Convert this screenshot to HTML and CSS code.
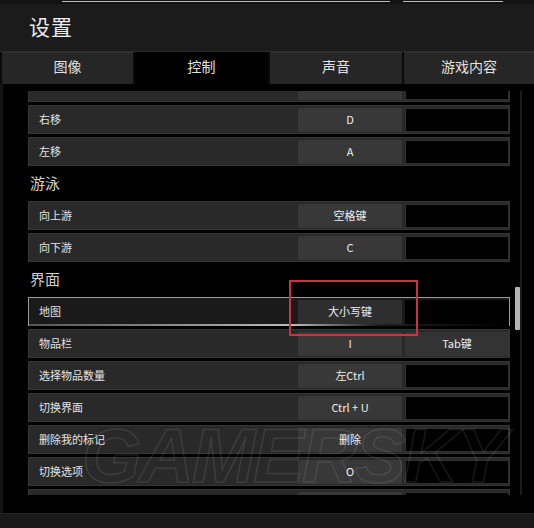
FILE: index.html
```html
<!DOCTYPE html>
<html lang="zh-CN">
<head>
<meta charset="UTF-8">
<meta name="viewport" content="width=device-width, initial-scale=1.0">
<title>设置</title>
<link rel="stylesheet" href="styles.css">
</head>
<body>

<div id="window">
  <div class="topline"><span class="seg seg-a"></span><span class="seg seg-b"></span></div>

  <div class="header">设置</div>

  <div class="tabs">
    <div class="tab">图像</div>
    <div class="tab active">控制</div>
    <div class="tab">声音</div>
    <div class="tab">游戏内容</div>
  </div>

  <div class="panel">
    <div class="scroll">
      <div class="list">
        <div class="row"><div class="label"></div><div class="key"></div><div class="key2"></div></div>
        <div class="row"><div class="label">右移</div><div class="key">D</div><div class="key2"></div></div>
        <div class="row"><div class="label">左移</div><div class="key">A</div><div class="key2"></div></div>

        <div class="section">游泳</div>
        <div class="row"><div class="label">向上游</div><div class="key">空格键</div><div class="key2"></div></div>
        <div class="row"><div class="label">向下游</div><div class="key">C</div><div class="key2"></div></div>

        <div class="section">界面</div>
        <div class="row selected"><div class="label">地图</div><div class="key">大小写键</div><div class="key2"></div></div>
        <div class="row"><div class="label">物品栏</div><div class="key">I</div><div class="key2 filled">Tab键</div></div>
        <div class="row"><div class="label">选择物品数量</div><div class="key">左Ctrl</div><div class="key2"></div></div>
        <div class="row"><div class="label">切换界面</div><div class="key">Ctrl + U</div><div class="key2"></div></div>
        <div class="row"><div class="label">删除我的标记</div><div class="key">删除</div><div class="key2"></div></div>
        <div class="row"><div class="label">切换选项</div><div class="key">O</div><div class="key2"></div></div>
        <div class="row"><div class="label"></div><div class="key"></div><div class="key2"></div></div>
      </div>
    </div>
    <div class="scrollbar"><div class="thumb"></div></div>
  </div>

  <div class="bottombar"></div>

  <!-- overlays -->
  <div class="watermark">GAMERSKY</div>
  <div class="highlight"></div>
</div>

</body>
</html>
```

FILE: styles.css
```css
  /* Settings / controls screen */

  body {
    margin: 0;
    background: #000;
    font-family: "Noto Sans CJK SC", "Liberation Sans", sans-serif;
    color: #ddd;
  }

  #window {
    position: relative;
    width: 534px;
    height: 528px;
    overflow: hidden;
    background: #000;
  }

  .topline {
    height: 4px;
    background: #121212;
    position: relative;
  }

  .topline .seg {
    position: absolute;
    top: 1px;
    height: 1px;
    background: #bdbdbd;
  }

  .seg-a { left: 62px; width: 328px; }
  .seg-b { left: 403px; width: 100px; }

  .header {
    height: 47px;
    line-height: 44px;
    padding-left: 29px;
    background: #1b1b1b;
    border-bottom: 1px solid #2c2c2c;
    font-size: 21px;
    color: #ececec;
    letter-spacing: 1px;
  }

  .tabs {
    display: grid;
    grid-template-columns: 131px 133px 132px 1fr;
    column-gap: 2px;
    height: 32px;
    padding-left: 2px;
    background: #0a0a0a;
  }

  .tab {
    background: #262626;
    border-top: 1px solid #333;
    display: flex;
    align-items: center;
    justify-content: center;
    padding-bottom: 5px;
    font-size: 14px;
    color: #e2e2e2;
  }

  .tab.active {
    background: #000;
    border-top-color: #000;
  }

  .panel {
    display: flex;
    height: 429px;
    border-left: 3px solid #131313;
    padding-left: 25px;
    box-sizing: border-box;
  }

  .scroll {
    width: 482px;
    height: 404px;
    margin-top: 7px;
    overflow: hidden;
  }

  .list {
    display: flex;
    flex-direction: column;
    gap: 3px;
    margin-top: -18px;
  }

  .row {
    height: 29px;
    box-sizing: border-box;
    display: grid;
    grid-template-columns: 269px 104px 1fr;
    padding: 2px 0 1px 0;
    background: #292929;
    border: 1px solid #363636;
    font-size: 11px;
  }

  .label {
    display: flex;
    align-items: center;
    padding-left: 10px;
    padding-bottom: 2px;
    color: #e4e4e4;
  }

  .key {
    display: flex;
    align-items: center;
    justify-content: center;
    padding-bottom: 2px;
    background: #383838;
    color: #eee;
  }

  .key2 {
    margin-left: 3px;
    background: #000;
    border: 1px solid #2e2e2e;
    display: flex;
    align-items: center;
    justify-content: center;
    padding-bottom: 2px;
    color: #eee;
  }

  .key2.filled {
    background: #333;
    border-color: #333;
  }

  .row.selected {
    background: #1a1a1a;
    border-color: #9a9a9a;
    position: relative;
  }

  .row.selected::after {
    content: "";
    position: absolute;
    left: 0;
    right: 0;
    bottom: -1px;
    height: 2px;
    background: linear-gradient(to right, #555 0%, #bbb 55%, #222 72%, #000 100%);
  }

  .row.selected .key {
    background: #2e2e2e;
  }

  .row.selected .key2 {
    border-color: #000;
  }

  .section {
    height: 29px;
    box-sizing: border-box;
    display: flex;
    align-items: center;
    padding-left: 2px;
    padding-bottom: 2px;
    font-size: 15px;
    color: #cfcfcf;
  }

  .scrollbar {
    position: relative;
    width: 5px;
    height: 404px;
    margin-top: 7px;
    margin-left: 5px;
    border-right: 2px solid #1c1c1c;
  }

  .thumb {
    position: absolute;
    top: 196px;
    left: 0;
    width: 5px;
    height: 43px;
    background: #b5b5b5;
    border-radius: 1px;
  }

  .bottombar {
    height: 15px;
    background: #1a1a1a;
    border-top: 1px solid #262626;
  }

  .watermark {
    position: absolute;
    left: 82px;
    top: 412px;
    font-family: "Liberation Sans", sans-serif;
    font-weight: bold;
    font-style: italic;
    font-size: 76px;
    letter-spacing: -2px;
    color: transparent;
    -webkit-text-stroke: 1.5px rgba(255, 255, 255, 0.09);
    pointer-events: none;
  }

  .highlight {
    position: absolute;
    left: 289px;
    top: 280px;
    width: 125px;
    height: 52px;
    border: 2px solid #cc3340;
    pointer-events: none;
  }
```
